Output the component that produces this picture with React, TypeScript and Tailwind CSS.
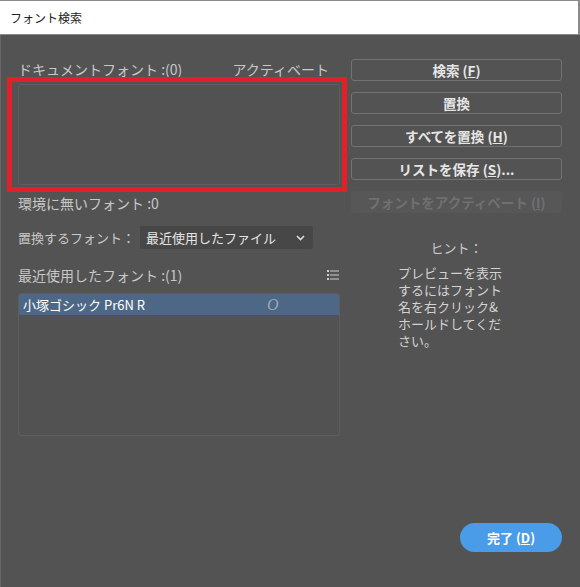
const FONT = { fontFamily: '"Noto Sans CJK JP", "Noto Sans", sans-serif' };

const BUTTONS = [
  { label: "検索 (", key: "F", tail: ")" },
  { label: "置換", key: "", tail: "" },
  { label: "すべてを置換 (", key: "H", tail: ")" },
  { label: "リストを保存 (", key: "S", tail: ")..." },
];

function ListIcon() {
  return (
    <svg width="12" height="10" viewBox="0 0 12 10" fill="#cfcfcf">
      <rect x="0" y="0" width="2" height="2" />
      <rect x="3" y="0.5" width="9" height="1" />
      <rect x="0" y="4" width="2" height="2" />
      <rect x="3" y="4.5" width="9" height="1" />
      <rect x="0" y="8" width="2" height="2" />
      <rect x="3" y="8.5" width="9" height="1" />
    </svg>
  );
}

export default function App() {
  return (
    <div className="flex h-[587px] w-[580px] flex-col bg-[#535353]" style={FONT}>
      {/* Title bar */}
      <div className="flex h-[35px] shrink-0 items-center border-t border-r-2 border-b border-[#8a8a8a] bg-white pl-[10px] text-[12px] text-[#222]">
        フォント検索
      </div>

      <div className="flex flex-1 flex-col border-l border-[#676767] pr-[18px] pl-[6px]">
        <div className="flex gap-[4px] pt-[22px]">
          {/* Left column */}
          <div className="flex w-[340px] flex-col">
            <div className="flex h-[20px] items-end justify-between pr-[18px] pl-[11px] text-[14px] leading-[16px] text-[#c8c8c8]">
              <span>ドキュメントフォント :(0)</span>
              <span>アクティベート</span>
            </div>
            <div className="h-[115px] border-[5px] border-[#e3202a] pt-[2px] pr-[2px] pb-[2px] pl-[6px]">
              <div className="h-full rounded-[3px] border border-[#5e5e5e] bg-[#525252]" />
            </div>

            <div className="mt-[3px] pl-[11px] text-[14px] leading-[16px] text-[#c8c8c8]">
              環境に無いフォント :0
            </div>

            <div className="mt-[15px] flex items-center pl-[11px]">
              <span className="w-[122px] text-[13px] text-[#c8c8c8]">置換するフォント：</span>
              <div className="flex h-[23px] w-[173px] items-center justify-between rounded-[2px] bg-[#474747] pr-[8px] pl-[6px] text-[13px] text-[#e6e6e6]">
                <span>最近使用したファイル</span>
                <svg width="9" height="6" viewBox="0 0 9 6" fill="none" stroke="#dcdcdc" strokeWidth="1.6">
                  <path d="M1 1l3.5 3.5L8 1" />
                </svg>
              </div>
            </div>

            <div className="mt-[18px] flex h-[16px] items-center justify-between pr-[8px] pl-[11px] text-[14px] leading-[16px] text-[#c8c8c8]">
              <span>最近使用したフォント :(1)</span>
              <ListIcon />
            </div>

            <div className="mt-[10px] ml-[11px] h-[143px] w-[322px] overflow-hidden rounded-[3px] border border-[#5e5e5e] bg-[#525252]">
              <div className="flex h-[21px] items-center bg-[#4d6886] pl-[4px] text-[13px] text-white">
                <span className="w-[244px]">小塚ゴシック Pr6N R</span>
                <span className="text-[16px] text-[#9aa6b3] italic" style={{ fontFamily: '"Liberation Serif", serif' }}>
                  O
                </span>
              </div>
            </div>
          </div>

          {/* Right column */}
          <div className="flex flex-1 flex-col pt-[2px]">
            <div className="flex flex-col gap-[11px]">
              {BUTTONS.map((b) => (
                <div
                  key={b.label}
                  className="flex h-[22px] items-center justify-center rounded-[3px] border border-[#727272] text-[13.5px] font-bold text-[#e6e6e6]"
                >
                  {b.label}
                  {b.key && <span className="underline">{b.key}</span>}
                  {b.tail}
                </div>
              ))}
              <div className="flex h-[22px] items-center justify-center rounded-[3px] bg-[#575757] text-[13.5px] font-bold text-[#707070]">
                フォントをアクティベート (<span className="underline">I</span>)
              </div>
            </div>

            <div className="mt-[25px] text-center text-[13px] text-[#c8c8c8]">ヒント：</div>
            <div className="mt-[6px] ml-[47px] text-[13px] leading-[17px] text-[#d2d2d2]">
              プレビューを表示
              <br />
              するにはフォント
              <br />
              名を右クリック&amp;
              <br />
              ホールドしてくだ
              <br />
              さい。
            </div>
          </div>
        </div>

        <div className="mt-auto mb-[35px] flex justify-end">
          <div className="flex h-[29px] w-[102px] items-center justify-center rounded-full bg-[#4a9be8] text-[13px] font-bold text-white">
            完了 (<span className="underline">D</span>)
          </div>
        </div>
      </div>
    </div>
  );
}
